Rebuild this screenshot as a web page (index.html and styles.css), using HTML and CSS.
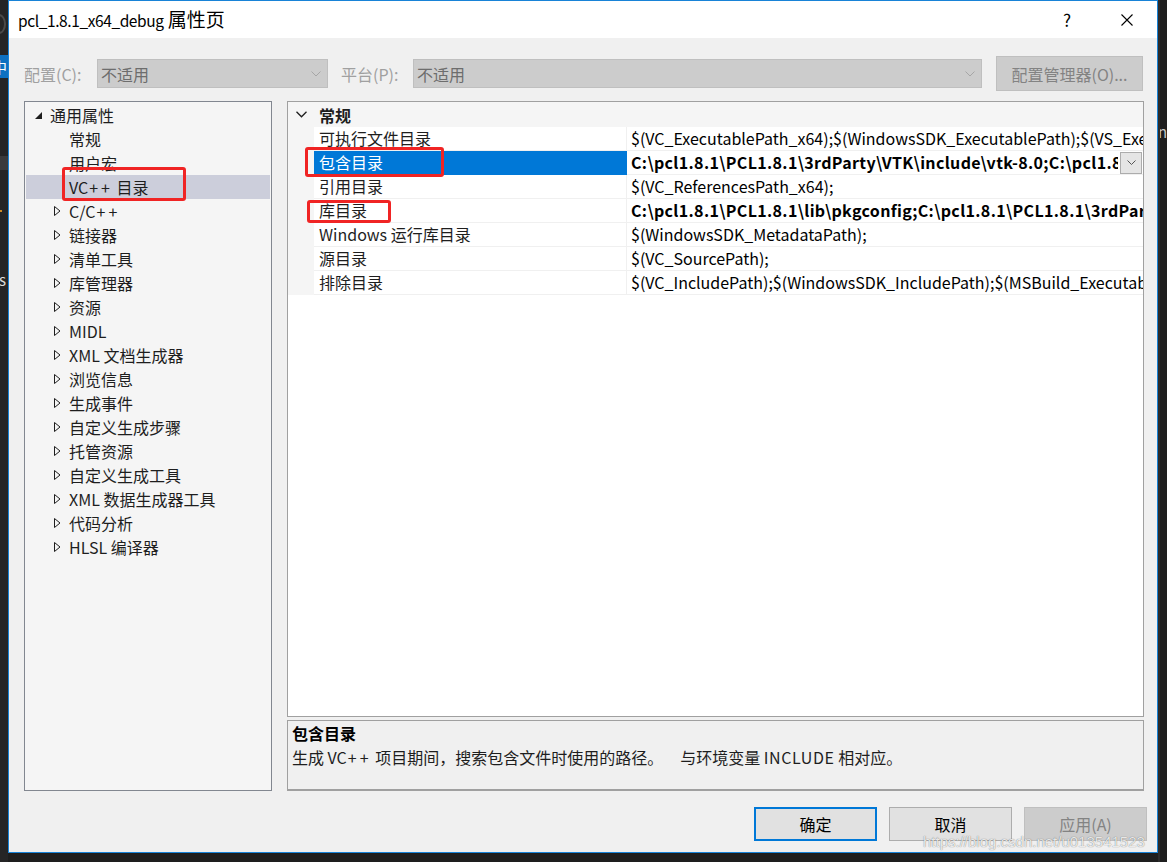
FILE: index.html
```html
<!DOCTYPE html>
<html lang="zh-CN">
<head>
<meta charset="utf-8">
<title>pcl_1.8.1_x64_debug 属性页</title>
<link rel="stylesheet" href="styles.css">
</head>
<body>
<div class="desk">
  <div class="side-left">
    <div class="ide-icon"></div>
    <div class="ide-tab">中</div>
    <div class="ide-gray"></div>
    <div class="ide-dot"></div>
    <div class="ide-s">s</div>
  </div>

  <div class="dialog">
    <div class="titlebar">
      <div class="title"><span class="title-lat">pcl_1.8.1_x64_debug</span> 属性页</div>
      <div class="tb-btn">?</div>
      <div class="tb-btn">
        <svg width="12" height="12" viewBox="0 0 12 12"><path d="M0.5 0.5 L11.5 11.5 M11.5 0.5 L0.5 11.5" stroke="#000" stroke-width="1.1" fill="none"/></svg>
      </div>
    </div>

    <div class="config-row">
      <span class="cfg-label">配置(C):</span>
      <div class="combo combo-cfg"><span>不适用</span><svg class="chev" width="10" height="6" viewBox="0 0 10 6"><path d="M0.5 0.5 L5 5 L9.5 0.5" stroke="#a6a6a6" fill="none"/></svg></div>
      <span class="cfg-label plat">平台(P):</span>
      <div class="combo combo-plat"><span>不适用</span><svg class="chev" width="10" height="6" viewBox="0 0 10 6"><path d="M0.5 0.5 L5 5 L9.5 0.5" stroke="#a6a6a6" fill="none"/></svg></div>
      <div class="btn btn-disabled cfg-mgr">配置管理器(O)...</div>
    </div>

    <div class="main">
      <div class="tree">
        <div class="node root"><span class="tog"><svg width="7" height="7" viewBox="0 0 7 7"><path d="M7 0 L7 7 L0 7 Z" fill="#1e1e1e"/></svg></span><span>通用属性</span></div>
        <div class="node leaf">常规</div>
        <div class="node leaf">用户宏</div>
        <div class="node leaf sel"><span>VC<span class="pp">++</span> 目录</span></div>
        <div class="node kid"><span class="tog"><svg width="7" height="10" viewBox="0 0 7 10"><path d="M0.5 0.5 L6 5 L0.5 9.5 Z" fill="none" stroke="#1e1e1e"/></svg></span><span>C/C<span class="pp">++</span></span></div>
        <div class="node kid"><span class="tog"><svg width="7" height="10" viewBox="0 0 7 10"><path d="M0.5 0.5 L6 5 L0.5 9.5 Z" fill="none" stroke="#1e1e1e"/></svg></span><span>链接器</span></div>
        <div class="node kid"><span class="tog"><svg width="7" height="10" viewBox="0 0 7 10"><path d="M0.5 0.5 L6 5 L0.5 9.5 Z" fill="none" stroke="#1e1e1e"/></svg></span><span>清单工具</span></div>
        <div class="node kid"><span class="tog"><svg width="7" height="10" viewBox="0 0 7 10"><path d="M0.5 0.5 L6 5 L0.5 9.5 Z" fill="none" stroke="#1e1e1e"/></svg></span><span>库管理器</span></div>
        <div class="node kid"><span class="tog"><svg width="7" height="10" viewBox="0 0 7 10"><path d="M0.5 0.5 L6 5 L0.5 9.5 Z" fill="none" stroke="#1e1e1e"/></svg></span><span>资源</span></div>
        <div class="node kid"><span class="tog"><svg width="7" height="10" viewBox="0 0 7 10"><path d="M0.5 0.5 L6 5 L0.5 9.5 Z" fill="none" stroke="#1e1e1e"/></svg></span><span>MIDL</span></div>
        <div class="node kid"><span class="tog"><svg width="7" height="10" viewBox="0 0 7 10"><path d="M0.5 0.5 L6 5 L0.5 9.5 Z" fill="none" stroke="#1e1e1e"/></svg></span><span>XML 文档生成器</span></div>
        <div class="node kid"><span class="tog"><svg width="7" height="10" viewBox="0 0 7 10"><path d="M0.5 0.5 L6 5 L0.5 9.5 Z" fill="none" stroke="#1e1e1e"/></svg></span><span>浏览信息</span></div>
        <div class="node kid"><span class="tog"><svg width="7" height="10" viewBox="0 0 7 10"><path d="M0.5 0.5 L6 5 L0.5 9.5 Z" fill="none" stroke="#1e1e1e"/></svg></span><span>生成事件</span></div>
        <div class="node kid"><span class="tog"><svg width="7" height="10" viewBox="0 0 7 10"><path d="M0.5 0.5 L6 5 L0.5 9.5 Z" fill="none" stroke="#1e1e1e"/></svg></span><span>自定义生成步骤</span></div>
        <div class="node kid"><span class="tog"><svg width="7" height="10" viewBox="0 0 7 10"><path d="M0.5 0.5 L6 5 L0.5 9.5 Z" fill="none" stroke="#1e1e1e"/></svg></span><span>托管资源</span></div>
        <div class="node kid"><span class="tog"><svg width="7" height="10" viewBox="0 0 7 10"><path d="M0.5 0.5 L6 5 L0.5 9.5 Z" fill="none" stroke="#1e1e1e"/></svg></span><span>自定义生成工具</span></div>
        <div class="node kid"><span class="tog"><svg width="7" height="10" viewBox="0 0 7 10"><path d="M0.5 0.5 L6 5 L0.5 9.5 Z" fill="none" stroke="#1e1e1e"/></svg></span><span>XML 数据生成器工具</span></div>
        <div class="node kid"><span class="tog"><svg width="7" height="10" viewBox="0 0 7 10"><path d="M0.5 0.5 L6 5 L0.5 9.5 Z" fill="none" stroke="#1e1e1e"/></svg></span><span>代码分析</span></div>
        <div class="node kid"><span class="tog"><svg width="7" height="10" viewBox="0 0 7 10"><path d="M0.5 0.5 L6 5 L0.5 9.5 Z" fill="none" stroke="#1e1e1e"/></svg></span><span>HLSL 编译器</span></div>
      </div>

      <div class="right">
        <div class="grid">
          <div class="cat">
            <span class="cat-tog"><svg width="11" height="7" viewBox="0 0 11 7"><path d="M0.5 0.8 L5.5 5.8 L10.5 0.8" stroke="#1e1e1e" stroke-width="1.3" fill="none"/></svg></span>
            <span class="cat-name">常规</span>
          </div>
          <div class="prow"><div class="gut"></div><div class="pname">可执行文件目录</div><div class="pval"><span class="vtxt">$(VC_ExecutablePath_x64);$(WindowsSDK_ExecutablePath);$(VS_ExecutablePath);$(MSBuild_ExecutablePath);$(FxCopDir);$(PATH);</span></div></div>
          <div class="prow"><div class="gut"></div><div class="pname psel">包含目录</div><div class="pval"><span class="vtxt bold">C:\pcl1.8.1\PCL1.8.1\3rdParty\VTK\include\vtk-8.0;C:\pcl1.8.1\PCL1.8.1\3rdParty\Qhull\include</span><span class="dd"><svg width="9" height="5" viewBox="0 0 9 5"><path d="M0.5 0.5 L4.5 4.5 L8.5 0.5" stroke="#555" fill="none"/></svg></span></div></div>
          <div class="prow"><div class="gut"></div><div class="pname">引用目录</div><div class="pval"><span class="vtxt">$(VC_ReferencesPath_x64);</span></div></div>
          <div class="prow"><div class="gut"></div><div class="pname">库目录</div><div class="pval"><span class="vtxt bold">C:\pcl1.8.1\PCL1.8.1\lib\pkgconfig;C:\pcl1.8.1\PCL1.8.1\3rdParty\Boost\lib;C:\pcl1.8.1\PCL1.8.1\lib</span></div></div>
          <div class="prow"><div class="gut"></div><div class="pname">Windows 运行库目录</div><div class="pval"><span class="vtxt">$(WindowsSDK_MetadataPath);</span></div></div>
          <div class="prow"><div class="gut"></div><div class="pname">源目录</div><div class="pval"><span class="vtxt">$(VC_SourcePath);</span></div></div>
          <div class="prow"><div class="gut"></div><div class="pname">排除目录</div><div class="pval"><span class="vtxt">$(VC_IncludePath);$(WindowsSDK_IncludePath);$(MSBuild_ExecutablePath);$(VC_LibraryPath_x64);</span></div></div>
        </div>
        <div class="desc">
          <div class="desc-title">包含目录</div>
          <div class="desc-text">生成 VC<span class="pp">++</span> 项目期间，搜索包含文件时使用的路径。<span class="gap"></span>与环境变量 <span class="caps">INCLUDE</span> 相对应。</div>
        </div>
      </div>
    </div>

    <div class="buttons">
      <div class="btn btn-ok">确定</div>
      <div class="btn btn-norm">取消</div>
      <div class="btn btn-disabled">应用(A)</div>
    </div>

    <div class="mark mark-vc"></div>
    <div class="mark mark-inc"></div>
    <div class="mark mark-lib"></div>
    <div class="watermark">https://blog.csdn.net/u013541523</div>
  </div>

  <div class="side-right"><span class="ide-r">n(</span></div>
</div>
</body>
</html>
```

FILE: styles.css
```css
* { box-sizing: border-box; }
html, body { margin: 0; padding: 0; }
body {
  width: 1167px;
  height: 862px;
  overflow: hidden;
  background: #1e1e1e;
  font-family: "Noto Sans CJK SC", sans-serif;
  font-size: 16px;
  color: #1e1e1e;
}
.desk { display: flex; height: 862px; }

/* IDE fragments around the dialog */
.side-left {
  width: 8px;
  flex: none;
  background: #252526;
  display: flex;
  flex-direction: column;
  overflow: hidden;
}
.ide-icon { height: 20px; margin-top: 14px; border: 2px solid #4a4a4a; border-radius: 50%; width: 14px; margin-left: -8px; }
.ide-tab {
  height: 23px;
  margin-top: 21px;
  background: #0e70c0;
  color: #fff;
  font-size: 15px;
  line-height: 23px;
  text-indent: -8px;
  white-space: nowrap;
}
.ide-gray { height: 14px; margin-top: 78px; background: #3a3a3c; }
.ide-dot { height: 2px; width: 2px; margin-top: 40px; background: #d08b22; }
.ide-s { margin-top: 60px; color: #ddd; font-size: 15px; line-height: 16px; text-indent: -1px; }
.side-right {
  width: 9px;
  flex: none;
  background: #1e1e1e;
  border-left: 2px solid #2b2b2b;
  overflow: hidden;
}
.ide-r {
  display: block;
  margin-top: 121px;
  margin-left: -2px;
  color: #c8c8c8;
  font-size: 15px;
  white-space: nowrap;
}

/* dialog */
.dialog {
  width: 1150px;
  height: 853px;
  flex: none;
  border: 1px solid #1883d7;
  background: #f0f0f0;
  position: relative;
  display: flex;
  flex-direction: column;
}
.titlebar {
  height: 37px;
  background: #fff;
  display: flex;
  align-items: center;
  padding-left: 9px;
}
.title { flex: 1; font-size: 19px; color: #000; line-height: 24px; }
.title-lat { font-size: 15.5px; letter-spacing: -0.4px; }
.tb-btn {
  width: 60px;
  height: 37px;
  display: flex;
  align-items: center;
  justify-content: center;
  font-size: 17px;
  color: #000;
}

.config-row {
  display: flex;
  align-items: center;
  height: 35px;
  margin-top: 18px;
  padding-left: 15px;
}
.cfg-label { width: 73px; color: #a0a0a0; }
.cfg-label.plat { width: 72px; margin-left: 13px; }
.combo {
  height: 29px;
  background: #cccccc;
  border: 1px solid #bfbfbf;
  display: flex;
  align-items: center;
  justify-content: space-between;
  padding: 0 6px 0 3px;
  color: #6d6d6d;
}
.combo-cfg { width: 231px; }
.combo-plat { width: 569px; margin-right: 14px; }

.btn {
  width: 123px;
  height: 34px;
  display: flex;
  align-items: center;
  justify-content: center;
  color: #000;
  background: #e1e1e1;
  border: 1px solid #adadad;
}
.btn-disabled { background: #cccccc; border-color: #bfbfbf; color: #838383; }
.btn-ok { border: 2px solid #0078d7; }
.cfg-mgr { width: 147px; height: 35px; }

/* main area */
.main {
  display: flex;
  gap: 15px;
  margin-top: 10px;
  padding-left: 15px;
  height: 690px;
}
.tree {
  width: 248px;
  border: 1px solid #828790;
  background: #f5f5f5;
  padding: 1px;
}
.node {
  height: 24px;
  line-height: 24px;
  display: flex;
  align-items: center;
  white-space: nowrap;
}
.tog {
  width: 16px;
  height: 24px;
  display: flex;
  align-items: center;
  justify-content: center;
  margin-right: 4px;
}
.root { padding-left: 4px; }
.kid { padding-left: 23px; }
.leaf { padding-left: 43px; }
.sel { background: #cccedb; }
.pp { letter-spacing: 3px; margin-left: 1px; }

.right {
  width: 857px;
  display: flex;
  flex-direction: column;
  gap: 3px;
}
.grid {
  height: 616px;
  border: 1px solid #a0a0a0;
  background: #fff;
}
.cat {
  height: 25px;
  background: #f5f5f5;
  display: flex;
  align-items: center;
}
.cat-tog { width: 26px; display: flex; justify-content: center; padding-left: 1px; }
.cat-name { font-weight: bold; padding-left: 5px; }
.prow { height: 24px; display: flex; }
.gut { width: 26px; background: #f5f5f5; flex: none; }
.pname {
  width: 313px;
  flex: none;
  padding-left: 5px;
  line-height: 23px;
  border-right: 1px solid #f0f0f0;
  border-bottom: 1px solid #f0f0f0;
  white-space: nowrap;
}
.psel { background: #0078d7; color: #fff; border-color: #0078d7; }
.pval {
  flex: 1;
  min-width: 0;
  display: flex;
  align-items: center;
  padding-left: 4px;
  border-bottom: 1px solid #f0f0f0;
  color: #000;
}
.vtxt {
  flex: 1;
  min-width: 0;
  overflow: hidden;
  white-space: nowrap;
  line-height: 23px;
}
.bold { font-weight: bold; letter-spacing: 0.35px; }
.dd {
  width: 22px;
  height: 22px;
  flex: none;
  margin: 0 1px 0 2px;
  background: #e5e5e5;
  border: 1px solid #acacac;
  display: flex;
  align-items: center;
  justify-content: center;
}

.desc {
  height: 71px;
  border: 1px solid #a0a0a0;
  border-bottom-width: 2px;
  background: #f0f0f0;
  padding: 0 4px;
  line-height: 24px;
}
.desc-title { font-weight: bold; color: #000; }
.gap { display: inline-block; width: 17px; }
.caps { letter-spacing: 0.6px; }

.buttons {
  display: flex;
  justify-content: flex-end;
  gap: 12px;
  margin-top: 16px;
  padding-right: 10px;
}

/* annotation overlays */
.mark {
  position: absolute;
  border: 3px solid #f02424;
  border-radius: 3px;
}
.mark-vc { left: 53px; top: 166px; width: 124px; height: 34px; }
.mark-inc { left: 296px; top: 146px; width: 139px; height: 30px; }
.mark-lib { left: 298px; top: 199px; width: 84px; height: 23px; }
.watermark {
  position: absolute;
  left: 914px;
  top: 832px;
  font-family: "Liberation Sans", sans-serif;
  font-size: 15px;
  color: rgba(255, 255, 255, 0.85);
  text-shadow: 0 0 1px rgba(0, 0, 0, 0.6);
  white-space: nowrap;
}
```
